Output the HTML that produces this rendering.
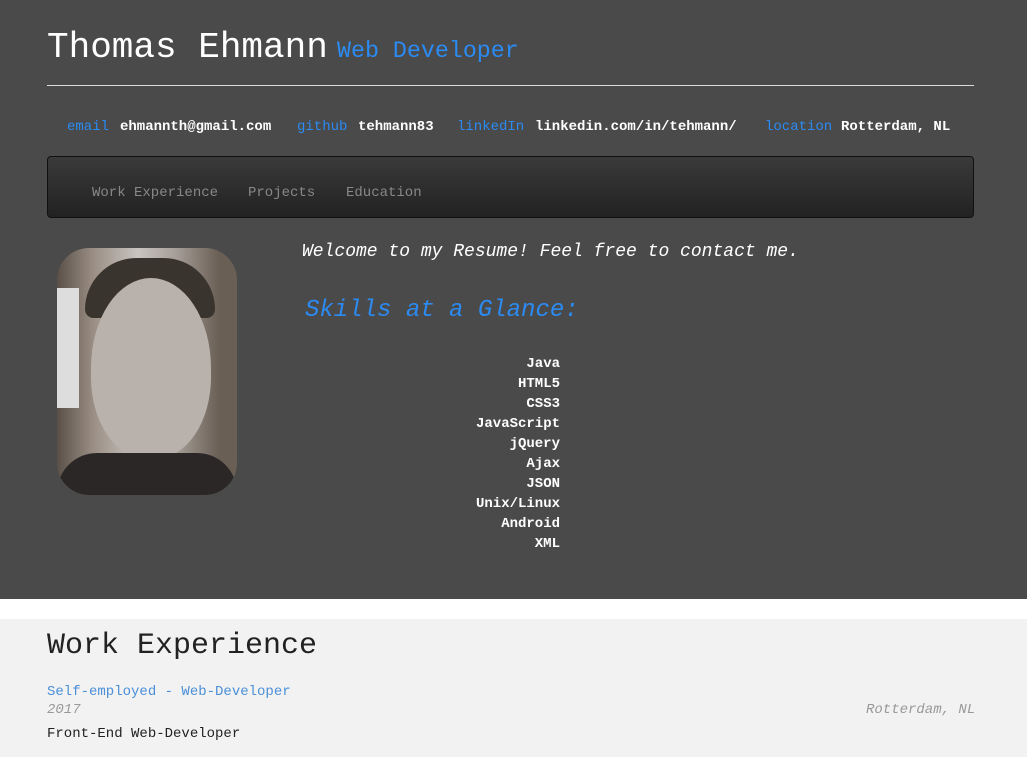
<!DOCTYPE html>
<html><head><meta charset="utf-8"><style>
*{margin:0;padding:0;box-sizing:border-box}
body{width:1027px;height:757px;overflow:hidden;background:#f2f2f2;font-family:"Liberation Mono","DejaVu Sans Mono",monospace;position:relative}
.dark{position:absolute;left:0;top:0;width:1027px;height:599px;background:#4a4a4a}
.white{position:absolute;left:0;top:599px;width:1027px;height:20px;background:#fff}
.a{position:absolute;white-space:nowrap}
.blue{color:#2b8bf2}
.c{font-size:14px;top:119px}
.w{color:#fff;font-weight:bold}
.hr{position:absolute;left:47px;top:85px;width:927px;height:1px;background:#ddd}
.nav{position:absolute;left:47px;top:156px;width:927px;height:62px;border:1px solid #111;border-radius:4px;background:linear-gradient(#3a3a3a,#222)}
.photo{position:absolute;left:57px;top:248px;width:180px;height:247px;border-radius:32px;overflow:hidden;background:linear-gradient(90deg,#5a5048 0%,#9a8e84 20%,#c8c4c0 45%,#a8a09a 65%,#6a5f55 90%)}
.skills{position:absolute;left:400px;top:354px;width:160px;text-align:right;color:#fff;font-weight:bold;font-size:14px;line-height:20px}
</style></head><body>
<div class="dark"></div><div class="white"></div>
<div class="a" style="left:47px;top:27px;font-size:36px;color:#fff">Thomas Ehmann</div>
<div class="a blue" style="left:337px;top:38px;font-size:23.3px">Web Developer</div>
<div class="hr"></div>
<div class="a c blue" style="left:67px">email</div>
<div class="a c w" style="left:120px">ehmannth@gmail.com</div>
<div class="a c blue" style="left:297px">github</div>
<div class="a c w" style="left:358px">tehmann83</div>
<div class="a c blue" style="left:457px">linkedIn</div>
<div class="a c w" style="left:535px">linkedin.com/in/tehmann/</div>
<div class="a c blue" style="left:765px">location</div>
<div class="a c w" style="left:841px">Rotterdam, NL</div>
<div class="nav"></div>
<div class="a" style="left:92px;top:185px;font-size:14px;color:#888">Work Experience</div>
<div class="a" style="left:248px;top:185px;font-size:14px;color:#888">Projects</div>
<div class="a" style="left:346px;top:185px;font-size:14px;color:#888">Education</div>
<div class="photo">
<div style="position:absolute;left:0;top:40px;width:22px;height:120px;background:#ddd"></div>
<div style="position:absolute;left:28px;top:10px;width:130px;height:60px;border-radius:60px 60px 10px 10px;background:#3a342f"></div>
<div style="position:absolute;left:34px;top:30px;width:120px;height:180px;border-radius:50% 50% 45% 45%;background:#b9b2ac"></div>
<div style="position:absolute;left:0;top:205px;width:180px;height:50px;border-radius:40px 40px 0 0;background:#2a2726"></div>
</div>
<div class="a" style="left:302px;top:242px;font-size:18px;color:#fff;font-style:italic">Welcome to my Resume! Feel free to contact me.</div>
<div class="a blue" style="left:305px;top:297px;font-size:24px;font-style:italic">Skills at a Glance:</div>
<div class="skills">Java<br>HTML5<br>CSS3<br>JavaScript<br>jQuery<br>Ajax<br>JSON<br>Unix/Linux<br>Android<br>XML</div>
<div class="a" style="left:47px;top:629px;font-size:30px;color:#222">Work Experience</div>
<div class="a" style="left:47px;top:684px;font-size:14px;color:#4a8fd8">Self-employed - Web-Developer</div>
<div class="a" style="left:47px;top:702px;font-size:14px;color:#999;font-style:italic">2017</div>
<div class="a" style="left:866px;top:702px;font-size:14px;color:#999;font-style:italic">Rotterdam, NL</div>
<div class="a" style="left:47px;top:726px;font-size:14px;color:#222">Front-End Web-Developer</div>
</body></html>
